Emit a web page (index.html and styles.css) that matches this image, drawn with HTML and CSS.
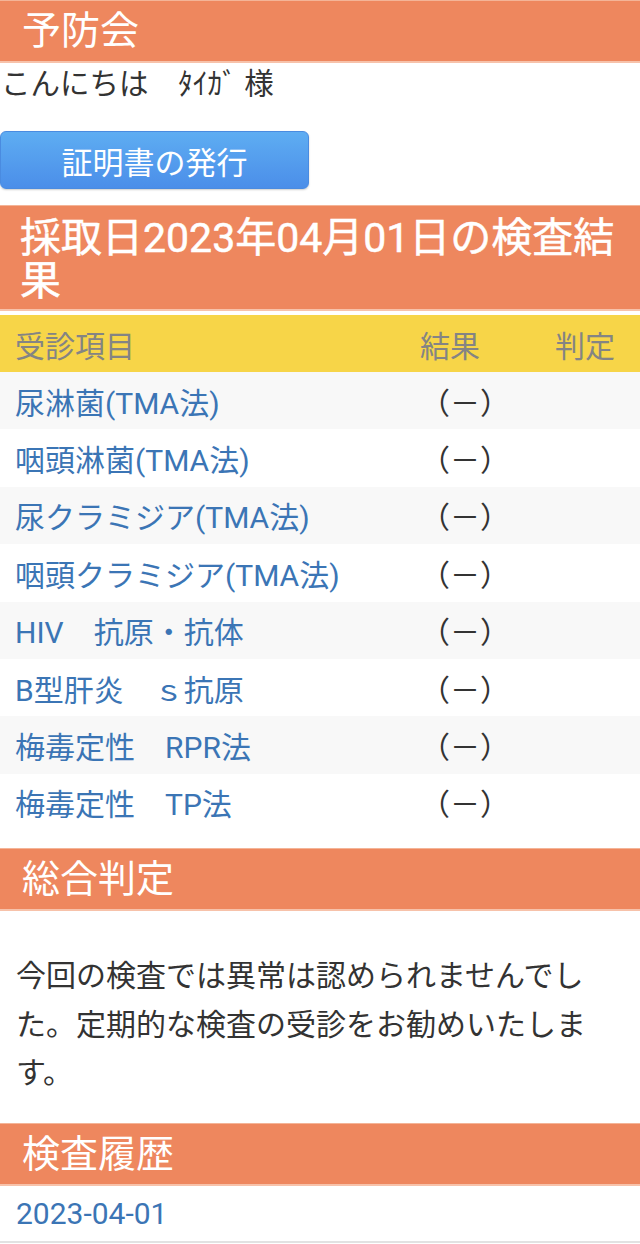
FILE: index.html
```html
<!DOCTYPE html>
<html lang="ja">
<head>
<meta charset="utf-8">
<title>予防会</title>
<link rel="stylesheet" href="styles.css">
</head>
<body>
<header class="bar bar-top"><h1 class="bar-title">予防会</h1></header>
<p class="greeting">こんにちは　ﾀｲｶﾞ 様</p>
<button class="btn-cert" type="button">証明書の発行</button>

<section class="section">
  <h2 class="bar bar-result">採取日2023年04月01日の検査結果</h2>
  <div class="table">
    <div class="row row-head">
      <span class="cell-item">受診項目</span>
      <span class="cell-res">結果</span>
      <span class="cell-judge">判定</span>
    </div>
    <div class="row odd"><span class="cell-item">尿淋菌(TMA法)</span><span class="cell-res">（－）</span><span class="cell-judge"></span></div>
    <div class="row"><span class="cell-item">咽頭淋菌(TMA法)</span><span class="cell-res">（－）</span><span class="cell-judge"></span></div>
    <div class="row odd"><span class="cell-item">尿クラミジア(TMA法)</span><span class="cell-res">（－）</span><span class="cell-judge"></span></div>
    <div class="row"><span class="cell-item">咽頭クラミジア(TMA法)</span><span class="cell-res">（－）</span><span class="cell-judge"></span></div>
    <div class="row odd"><span class="cell-item">HIV　抗原・抗体</span><span class="cell-res">（－）</span><span class="cell-judge"></span></div>
    <div class="row"><span class="cell-item">B型肝炎　ｓ抗原</span><span class="cell-res">（－）</span><span class="cell-judge"></span></div>
    <div class="row odd"><span class="cell-item">梅毒定性　RPR法</span><span class="cell-res">（－）</span><span class="cell-judge"></span></div>
    <div class="row"><span class="cell-item">梅毒定性　TP法</span><span class="cell-res">（－）</span><span class="cell-judge"></span></div>
  </div>
</section>

<section class="section section-summary">
  <h2 class="bar bar-plain">総合判定</h2>
  <p class="summary">今回の検査では異常は認められませんでした。定期的な検査の受診をお勧めいたします。</p>
</section>

<section class="section section-history">
  <h2 class="bar bar-plain">検査履歴</h2>
  <div class="history-row">2023-04-01</div>
</section>
</body>
</html>
```

FILE: styles.css
```css
* { box-sizing: border-box; }
html, body {
  margin: 0;
  padding: 0;
  background: #ffffff;
}
body {
  font-family: Roboto, "Noto Sans CJK JP", sans-serif;
  font-size: 30px;
  color: #333333;
}
.bar {
  margin: 0;
  background: #ee875e;
  color: #ffffff;
  font-size: 38px;
  font-weight: 400;
  border-top: 1px solid #f4b497;
  border-bottom: 2px solid #f7c2aa;
  padding: 0 22px;
  line-height: 60px;
  height: 63px;
}
.bar-title {
  font-size: 39px;
  font-weight: 400;
  margin: 0;
  line-height: 60px;
}
.greeting {
  margin: 0;
  padding-left: 1px;
  height: 42px;
  line-height: 42px;
  font-size: 29.5px;
  color: #333333;
}
.btn-cert {
  display: block;
  margin: 26px 0 0 0;
  width: 309px;
  height: 58px;
  border: 1px solid #4a8be0;
  border-radius: 6px;
  background: linear-gradient(#5eadf2, #4b8ee9);
  color: #ffffff;
  font-family: Roboto, "Noto Sans CJK JP", sans-serif;
  font-size: 31px;
  padding: 0;
  box-shadow: 0 1px 2px rgba(0, 0, 0, 0.2);
}
.section { margin-top: 16px; }
.bar-result {
  height: auto;
  font-size: 41px;
  font-weight: 400;
  line-height: 43px;
  padding: 11px 20px 6px 20px;
  -webkit-text-stroke: 0.5px #ffffff;
}
.table { margin-top: 4px; }
.row {
  display: grid;
  grid-template-columns: 1fr 135px 70px;
  align-items: center;
  height: 57.4px;
  padding: 0 15px;
  background: #ffffff;
}
.row.odd { background: #f8f8f8; }
.row-head {
  background: #f7d548;
  color: #848484;
  height: 57px;
}
.cell-item { white-space: nowrap; }
.row .cell-item { color: #3b75b5; }
.row-head .cell-item { color: #848484; }
.cell-res { color: #333333; }
.row-head .cell-res, .row-head .cell-judge { color: #848484; }
.section-summary { margin-top: 17px; }
.bar-plain { height: 63px; }
.summary {
  margin: 0;
  padding: 41px 44px 0 16px;
  line-height: 48.5px;
  font-size: 30px;
  color: #333333;
}
.section-history { margin-top: 25px; }
.history-row {
  height: 57px;
  line-height: 55px;
  padding: 0 16px;
  color: #3b75b5;
  border-bottom: 2px solid #e2e2e2;
}
```
